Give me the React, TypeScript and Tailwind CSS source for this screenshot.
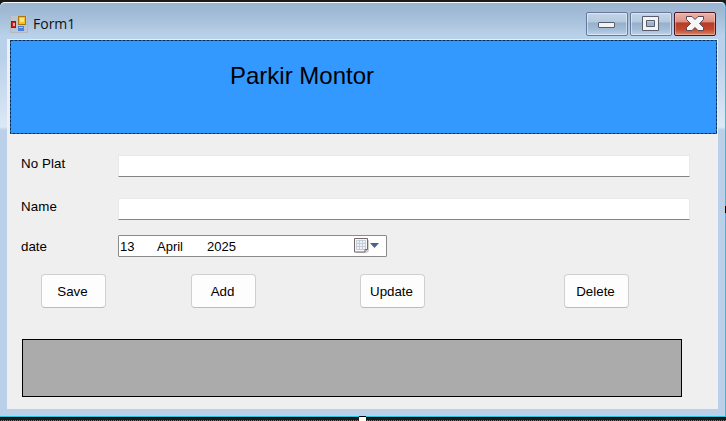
import type { ReactNode } from "react";

function AppIcon() {
  return (
    <svg width="18" height="18" viewBox="0 0 18 18" className="shrink-0">
      <rect x="0.5" y="0.5" width="17" height="17" fill="#b9c6d5" stroke="#b5b9be" />
      <rect x="1" y="6" width="5" height="7" fill="#c5251a" />
      <rect x="1.5" y="6.5" width="4" height="6" fill="none" stroke="#8e1a13" />
      <rect x="3" y="8" width="2" height="3" fill="#f3a79c" />
      <rect x="8" y="1" width="8" height="9" fill="#f5c022" />
      <rect x="8.5" y="1.5" width="7" height="8" fill="none" stroke="#a8780a" />
      <rect x="10" y="3" width="4" height="4" fill="#fbe084" />
      <rect x="8" y="11" width="6" height="5" fill="#4c7fe0" />
      <rect x="9" y="12" width="4" height="1" fill="#a9c6fa" />
    </svg>
  );
}

function CaptionButton({ close = false, children }: { close?: boolean; children: ReactNode }) {
  const tone = close
    ? "border-[#4a1526] bg-[linear-gradient(#eab4a8_0%,#db9084_42%,#b83a24_44%,#c04a30_75%,#d98668_100%)] shadow-[inset_0_0_0_1px_rgba(255,210,200,0.45)]"
    : "border-[#66799a] bg-[linear-gradient(#c4d4e6_0%,#b4c9df_42%,#96b0cd_44%,#a3bcd7_75%,#bcd3ea_100%)] shadow-[inset_0_0_0_1px_rgba(255,255,255,0.45)]";
  return (
    <button className={`flex h-6 w-[42px] items-center justify-center rounded-[2px] border ${tone}`}>
      {children}
    </button>
  );
}

function TitleBar() {
  return (
    <header className="flex h-9 items-start justify-between pl-[10px] pr-[9px]">
      <div className="flex pt-[13px]">
        <AppIcon />
        <span className="ml-[5px] font-['Open_Sans',sans-serif] text-[14px] leading-[18px] text-[#111]">
          Form1
        </span>
      </div>
      <div className="flex gap-[2px] pt-[10px]">
        <CaptionButton>
          <svg width="18" height="8" viewBox="0 0 18 8" className="mt-[2px]">
            <rect x="0.5" y="1.5" width="16" height="5" rx="0.5" fill="#f3f3f3" stroke="#565c6c" />
          </svg>
        </CaptionButton>
        <CaptionButton>
          <svg width="18" height="16" viewBox="0 0 18 16">
            <path fillRule="evenodd" d="M.5 .5h16v14h-16zM4.5 4.5h8v6h-8z" fill="#f3f3f3" stroke="#565c6c" />
          </svg>
        </CaptionButton>
        <CaptionButton close>
          <svg width="18" height="16" viewBox="0 0 18 16">
            <path
              d="M.5 .5h5.500L9 3.500l3-3h5.500v3l-4 4 4 4v3H12l-3-3-3 3H.5v-3l4-4-4-4z"
              fill="#f6f6f6"
              stroke="#5b4550"
              strokeLinejoin="round"
            />
          </svg>
        </CaptionButton>
      </div>
    </header>
  );
}

function Field({ label }: { label: string }) {
  return (
    <label className="flex h-[22px]">
      <span className="w-[97px] pt-[1px] leading-4 tracking-[0.1px]">{label}</span>
      <input className="h-[22px] w-[572px] border border-b-[#848484] border-l-[#e9e9e9] border-r-[#e9e9e9] border-t-[#e9e9e9] bg-white px-1 outline-none" />
    </label>
  );
}

function DatePicker() {
  return (
    <div className="flex h-[22px] w-[269px] items-center rounded-[1px] border border-[#8b8b8b] bg-white pl-[1px] text-[13px]">
      <span className="w-[37px] pt-[2px]">13</span>
      <span className="w-[50px] pt-[2px]">April</span>
      <span className="w-[147px] pt-[2px]">2025</span>
      <svg width="28" height="16" viewBox="0 0 28 16" className="shrink-0">
        <path d="M2 2h13v11l-2 2H2z" fill="#d5d0cd" />
        <path d="M.5 .5h13v11l-2.500 2.500H.5z" fill="#f5f7fa" stroke="#75696a" />
        <path d="M2.500 2.500h9v9h-9zM5.500 2.500v9M8.500 2.500v9M2.500 5.500h9M2.500 8.500h9" fill="#eef2f8" stroke="#c6cdd8" />
        <path d="M11 14v-2.500h2.500" fill="#fff" stroke="#75696a" />
        <path d="M16 5h9l-4.500 5z" fill="#4a608d" />
      </svg>
    </div>
  );
}

function ActionButton({ children }: { children: ReactNode }) {
  return (
    <button className="h-[34px] w-[65px] rounded-[4px] border border-[#d0d0d0] border-b-[#bbbbbb] bg-[#fdfdfd] pr-[2px] pt-px">
      {children}
    </button>
  );
}

function DashedBanner() {
  return (
    <div className="relative ml-[3px] mt-px h-[94px] w-[707px] bg-[#3399ff]">
      <svg width="707" height="94" className="absolute inset-0">
        <rect x="0.5" y="0.5" width="706" height="93" fill="none" stroke="#0b2c55" strokeDasharray="3 1" />
      </svg>
      <h1 className="pl-[220px] pt-[22px] text-[24px] leading-7">Parkir Montor</h1>
    </div>
  );
}

export default function App() {
  return (
    <div className="relative h-[421px] w-[726px] overflow-hidden bg-[#1b1a1b] pt-[2px] font-['Liberation_Sans',Arial,sans-serif] text-[13.33px] text-black">
      <div className="h-[415px] rounded-t-[5px] border-b border-r border-[#26c5de] bg-[linear-gradient(#99b4d1_0px,#a5bed9_15px,#b9d1ea_34px,#bad0ea_55px,#dce8f6_125px,#bad0e9_128px,#bad0e9_100%)] shadow-[inset_0_1px_0_#f4f8fc]">
        <TitleBar />
        <main className="ml-[7px] mt-px flex h-[370px] w-[711px] flex-col bg-[#efefef]">
          <DashedBanner />
          <div className="mt-[21px] flex flex-col pl-[14px]">
            <Field label="No Plat" />
            <div className="mt-[21px]">
              <Field label="Name" />
            </div>
            <div className="mt-[15px] flex">
              <span className="w-[97px] pt-[4px] leading-4">date</span>
              <DatePicker />
            </div>
          </div>
          <div className="mt-[17px] flex pl-[34px]">
            <ActionButton>Save</ActionButton>
            <div className="ml-[85px]">
              <ActionButton>Add</ActionButton>
            </div>
            <div className="ml-[104px]">
              <ActionButton>Update</ActionButton>
            </div>
            <div className="ml-[139px]">
              <ActionButton>Delete</ActionButton>
            </div>
          </div>
          <div className="ml-[15px] mt-[31px] h-[58px] w-[660px] border border-black bg-[#ababab]" />
        </main>
      </div>
      <div className="h-px bg-black" />
      <div className="mt-[2px] h-px bg-[repeating-linear-gradient(90deg,#1b1a1b_0px,#1b1a1b_1px,#777_1px,#777_2px)]" />
      <div className="absolute bottom-0 left-[359px] h-[5px] w-[7px] border-t border-black bg-white" />
      <div className="absolute right-0 top-[206px] h-[7px] w-px bg-black" />
    </div>
  );
}
